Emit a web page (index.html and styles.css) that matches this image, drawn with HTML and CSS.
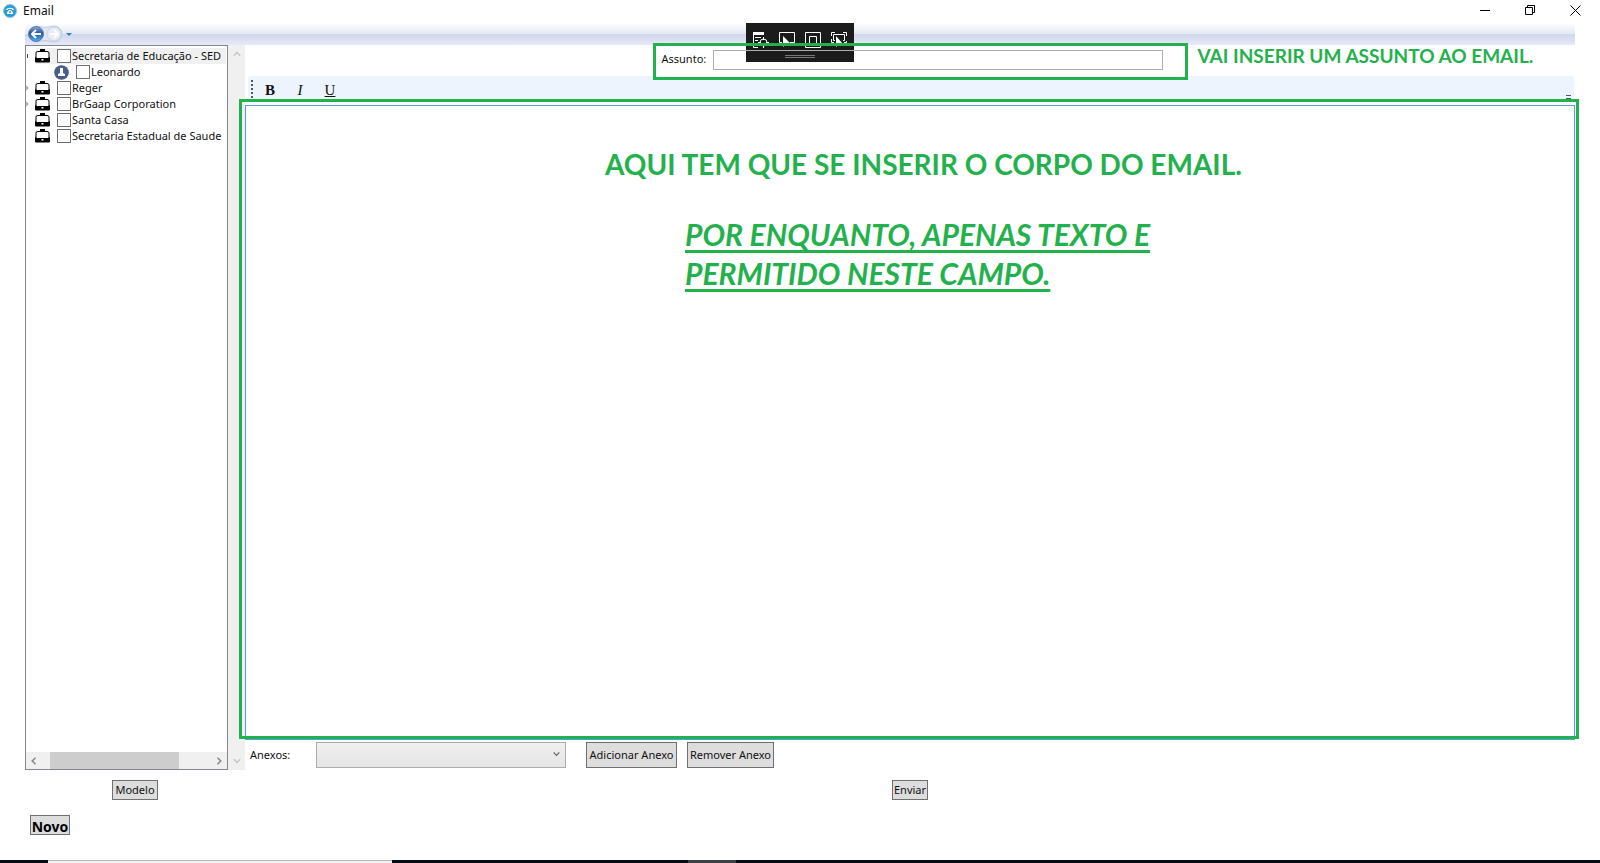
FILE: index.html
```html
<!DOCTYPE html>
<html lang="pt-BR">
<head>
<meta charset="utf-8">
<title>Email</title>
<link rel="stylesheet" href="styles.css">
</head>
<body>
<svg class="sprite" aria-hidden="true">
  <symbol id="case" viewBox="0 0 15 14"><path d="M5 0h5v2H5z"/><path d="M1 9V4Q1 2.500 3 2.500h9q2 0 2 1.500V9" fill="#fff" stroke="#000"/><path d="M0 8l2 1h11l2-1v4.500Q15 13.500 14 13.500H1Q0 13.500 0 12.500z"/><path d="M6.500 10h2v1.500h-2z" fill="#fff"/></symbol>
  <symbol id="left" viewBox="0 0 8 8"><path d="M5.500.8L2.200 4l3.300 3.200" fill="none" stroke="currentColor" stroke-width="1.500"/></symbol>
  <symbol id="right" viewBox="0 0 8 8"><path d="M2.500.8L5.800 4 2.500 7.200" fill="none" stroke="currentColor" stroke-width="1.500"/></symbol>
  <symbol id="up" viewBox="0 0 8 8"><path d="M.8 5.800L4 2.500l3.200 3.300" fill="none" stroke="currentColor" stroke-width="1.300"/></symbol>
  <symbol id="down" viewBox="0 0 8 8"><path d="M.8 2.200L4 5.500l3.200-3.300" fill="none" stroke="currentColor" stroke-width="1.300"/></symbol>
</svg>
<div class="window">
  <header class="titlebar">
    <svg class="app-icon" viewBox="0 0 14 14"><circle cx="7" cy="7" r="6.500" fill="#2a9bd6" stroke="#8cc4e6"/><path d="M3 6c0-3 8-3 8 0H9V5H5v1z" fill="#fff"/><path d="M4 10c0-2 1-4 3-4s3 2 3 4z" fill="#fff"/><circle cx="7" cy="8" r="1" fill="#2a9bd6"/></svg>
    <span class="title">Email</span>
    <div class="window-buttons">
      <button type="button" aria-label="Minimizar"><svg viewBox="0 0 11 11"><path d="M0 5.500h10" /></svg></button>
      <button type="button" aria-label="Restaurar"><svg viewBox="0 0 11 11"><path d="M.5 2.500h7v7h-7zM2.500 2.500v-2h7v7h-2"/></svg></button>
      <button type="button" aria-label="Fechar"><svg viewBox="0 0 11 11"><path d="M.5.5l10 10M10.500.5l-10 10"/></svg></button>
    </div>
  </header>

  <nav class="navbar">
    <button type="button" aria-label="Voltar"><svg class="nav-arrows" viewBox="0 0 50 22">
      <defs><linearGradient id="blue" x2="0" y2="1"><stop offset="0" stop-color="#8fa8d3"/><stop offset=".45" stop-color="#27559f"/><stop offset="1" stop-color="#4ab4f2"/></linearGradient></defs>
      <path d="M11 3Q20 6 29 3A8 8 0 0 1 29 19Q20 16 11 19z" fill="#e1e6f3" stroke="#c3cbdf"/>
      <circle cx="29" cy="11" r="7" fill="#e6ebf6" stroke="#cbd2e3"/><path d="M25 11h7M29 7l4 4-4 4" fill="none" stroke="#fff" stroke-width="2"/>
      <circle cx="11" cy="11" r="7.500" fill="url(#blue)" stroke="#5b7cb5"/><path d="M16 11H8M11 7l-4 4 4 4" fill="none" stroke="#fff" stroke-width="2"/>
      <path d="M41 10h6l-3 3z" fill="#2b84bd"/>
    </svg></button>
  </nav>

  <main class="workspace">
    <aside class="sidebar">
      <div class="tree">
        <ul class="nodes">
          <li class="node selected"><span class="twist"><svg viewBox="0 0 8 8"><path d="M5.500 2v4" stroke="#444"/></svg></span><svg class="case"><use href="#case"/></svg><label><input type="checkbox">Secretaria de Educação - SED</label></li>
          <li class="node child"><svg class="person" viewBox="0 0 15 15"><circle cx="7.500" cy="7.500" r="7.300" fill="#4a5f88"/><path d="M6 3h3v5l2 1v2H4V9l2-1z" fill="#fff"/></svg><label><input type="checkbox">Leonardo</label></li>
          <li class="node"><span class="twist"><svg viewBox="0 0 8 8"><use href="#right"/></svg></span><svg class="case"><use href="#case"/></svg><label><input type="checkbox">Reger</label></li>
          <li class="node"><span class="twist"><svg viewBox="0 0 8 8"><use href="#right"/></svg></span><svg class="case"><use href="#case"/></svg><label><input type="checkbox">BrGaap Corporation</label></li>
          <li class="node"><span class="twist"></span><svg class="case"><use href="#case"/></svg><label><input type="checkbox">Santa Casa</label></li>
          <li class="node"><span class="twist"></span><svg class="case"><use href="#case"/></svg><label><input type="checkbox">Secretaria Estadual de Saude</label></li>
        </ul>
        <div class="hscroll"><svg><use href="#left"/></svg><div class="track"><div class="thumb"></div></div><svg><use href="#right"/></svg></div>
      </div>
      <div class="vscroll"><svg><use href="#up"/></svg><svg><use href="#down"/></svg></div>
    </aside>

    <section class="compose">
      <div class="subject-row">
        <div class="subject">
          <label for="subject">Assunto:</label>
          <input id="subject" type="text">
          <p class="note note-subject">VAI INSERIR UM ASSUNTO AO EMAIL.</p>
        </div>
      </div>
      <div class="format-bar">
        <span class="grip"></span>
        <button type="button"><b>B</b></button>
        <button type="button"><i>I</i></button>
        <button type="button"><u>U</u></button>
        <span class="overflow"></span>
      </div>
      <div class="editor">
        <textarea aria-label="Corpo do email"></textarea>
        <div class="notes">
          <p class="note note-body">AQUI TEM QUE SE INSERIR O CORPO DO EMAIL.</p>
          <p class="note note-limit">POR ENQUANTO, APENAS TEXTO E<br>PERMITIDO NESTE CAMPO.</p>
        </div>
      </div>
      <div class="attachments">
        <label for="files">Anexos:</label>
        <div class="combo"><select id="files"><option></option></select><svg><use href="#down"/></svg></div>
        <button type="button" class="button add">Adicionar Anexo</button>
        <button type="button" class="button remove">Remover Anexo</button>
      </div>
    </section>

    <div class="actions"><button type="button" class="button model">Modelo</button></div>
    <div class="actions"><button type="button" class="button send">Enviar</button></div>
  </main>

  <footer class="footer"><button type="button" class="button new">Novo</button></footer>
  <div class="taskbar"><span class="search"></span><span class="task"></span></div>

  <div class="debug-bar">
    <div class="debug-icons">
      <svg viewBox="0 0 16 16"><path d="M0 0h11v3H0z" fill="#fff" stroke="none"/><path d="M.5 3v12.500H5M2 5.500h6M2 8.500h3M10.500 5v3M10.500 13v3M5 10.500h3M13 10.500h3"/><circle cx="10.500" cy="10.500" r="3.500"/></svg>
      <svg viewBox="0 0 16 16"><path d="M3 10.500H.5v-10h15v10H11"/><path d="M4 4v11l3-3h5z" fill="#fff" stroke="none"/></svg>
      <svg viewBox="0 0 16 16"><path d="M.5.5h15v15H.5zM4.500 4.500h7v8h-7z"/></svg>
      <svg viewBox="0 0 16 16"><path d="M.5 4V.5H4M12 .5h3.500V4M15.500 9v1.500H13M.5 7v3.500H3M4 8.500H2.500v-6h11v6H12"/><path d="M5 4v11l3-3h4z" fill="#fff" stroke="none"/></svg>
    </div>
    <span class="handle"></span>
  </div>
</div>
</body>
</html>
```
FILE: styles.css
```css
* { box-sizing: border-box; }
body { margin: 0; background: #fff; color: #111; font: 11px/16px "Noto Sans", sans-serif; }
button, input, select, textarea { font: inherit; color: inherit; margin: 0; border-radius: 0; }
button { padding: 0; border: 0; background: none; }
p, ul { margin: 0; padding: 0; list-style: none; }
svg { display: block; flex: none; }
.sprite { position: absolute; width: 0; height: 0; }
.window { position: relative; display: flex; flex-direction: column; height: 100vh; overflow: hidden; }

.titlebar { display: flex; align-items: center; gap: 6px; height: 23px; padding: 0 19px 2px 3px; font-size: 12px; }
.app-icon { width: 14px; height: 14px; }
.window-buttons { display: flex; gap: 34px; margin-left: auto; }
.window-buttons svg { width: 11px; height: 11px; fill: none; stroke: #000; }

.navbar { height: 22px; margin: 0 25px; background: linear-gradient(#fff, #e4e8f3 11px, #d0d6eb 11px, #e6e9f8); }
.nav-arrows { width: 50px; height: 22px; }

.workspace { flex: 1; min-height: 0; display: grid; grid-template: minmax(0, 1fr) 30px / 220px minmax(0, 1fr); margin: 0 25px; }
.sidebar { display: flex; min-height: 0; }
.tree { flex: 1; min-width: 0; display: flex; flex-direction: column; border: 1px solid #828790; }
.nodes { flex: 1; padding: 2px 1px 0 0; overflow: hidden; }
.node { display: flex; align-items: center; height: 16px; white-space: nowrap; }
.node label { display: flex; align-items: center; gap: 1px; margin-left: 7px; }
.node input { appearance: none; flex: none; width: 14px; height: 14px; border: 1px solid #707070; background: #fff; }
.selected { background: linear-gradient(90deg, #fff 10px, #f0f0f0 10px); }
.twist { flex: none; width: 9px; color: #aaa; }
.twist svg { width: 8px; height: 8px; margin-left: -4px; }
.case { width: 15px; height: 14px; }
.child { padding-left: 28px; }
.person { width: 15px; height: 15px; }
.hscroll { display: flex; align-items: center; height: 17px; padding: 0 4px; background: #f0f0f0; color: #888; }
.hscroll svg, .vscroll svg { width: 8px; height: 8px; }
.track { flex: 1; align-self: stretch; padding: 0 12px; }
.thumb { width: 84%; height: 100%; background: #cdcdcd; }
.vscroll { display: flex; flex-direction: column; justify-content: space-between; align-items: center; width: 17px; padding: 5px 0; background: #f0f0f0; color: #c4c4c4; }

.compose { display: flex; flex-direction: column; min-height: 0; }
.subject-row { display: flex; justify-content: center; height: 31px; padding: 5px 0 0 4px; }
.subject { position: relative; z-index: 3; display: flex; justify-content: space-between; width: 501px; line-height: 18px; }
.subject input { width: 450px; height: 20px; border: 1px solid #abadb3; background: none; }
.subject::after { content: ""; position: absolute; inset: -7px -25px -4px -9px; border: 3px solid #22b14c; pointer-events: none; }
.note { color: #22b14c; font-family: Lato, sans-serif; font-weight: 700; white-space: nowrap; }
.note-subject { position: absolute; left: calc(100% + 35px); top: -5px; font-size: 19px; line-height: 22px; }
.format-bar { display: flex; align-items: center; height: 26px; margin: 0 1px 3px 3px; padding-left: 3px; border-radius: 3px 3px 0 0; background: #eef4fd; font: 15px/16px "Liberation Serif", serif; }
.grip { width: 2px; height: 18px; margin-right: 2px; background: repeating-linear-gradient(#555 0 2px, transparent 2px 4px); }
.format-bar button { width: 30px; height: 20px; padding-top: 2px; }
.overflow { align-self: flex-end; width: 5px; height: 4px; margin: 0 3px 3px auto; border: solid #555; border-width: 1px 0; }
.editor { position: relative; flex: 1; min-height: 0; }
.editor textarea { display: block; width: 100%; height: 100%; border: 1px solid #569de5; resize: none; outline: 0; }
.editor::after { content: ""; position: absolute; inset: -6px -4px 1px -6px; border: 3px solid #22b14c; pointer-events: none; }
.notes { position: absolute; top: 40px; left: 50%; width: 636px; margin-left: -305px; font-size: 28px; line-height: 39px; pointer-events: none; }
.note-limit { margin: 31px 0 0 80px; font-size: 30px; font-style: italic; text-decoration: underline 3px; text-underline-offset: 4px; text-decoration-skip-ink: none; }
.attachments { display: flex; align-items: center; height: 30px; padding-left: 5px; }
.attachments label { width: 66px; }
.combo { position: relative; width: 250px; height: 26px; margin-right: 20px; }
.combo select { appearance: none; width: 100%; height: 100%; border: 1px solid #acacac; background: linear-gradient(#f0f0f0, #e5e5e5); }
.combo svg { position: absolute; right: 6px; top: 8px; width: 7px; height: 8px; color: #606060; pointer-events: none; }
.button { display: flex; align-items: center; justify-content: center; height: 20px; border: 1px solid #707070; background: #ddd; white-space: nowrap; }
.add, .remove { height: 26px; }
.add { width: 91px; margin-right: 10px; }
.remove { width: 87px; }
.actions { display: flex; justify-content: center; align-items: flex-end; }
.model { width: 46px; }
.send { width: 36px; }
.footer { height: 60px; padding: 15px 30px; }
.new { width: 40px; padding-top: 3px; font-size: 14px; font-weight: 700; color: #000; }
.taskbar { display: flex; height: 3px; background: #050b14; }
.search { width: 344px; margin-left: 48px; background: #f2f2f2; border-top: 1px solid #bbb; }
.task { width: 48px; margin-left: 296px; background: #3a4045; }

.debug-bar { position: absolute; z-index: 2; top: 23px; left: 50%; width: 108px; height: 39px; margin-left: -54px; padding: 15px 7px 0; background: #1b1b1b; }
.debug-icons { display: flex; justify-content: space-between; margin-top: -6px; }
.debug-icons svg { width: 16px; height: 16px; fill: none; stroke: #fff; }
.handle { display: block; width: 30px; height: 3px; margin: 7px auto 0; border: solid #777; border-width: 1px 0; }
```
